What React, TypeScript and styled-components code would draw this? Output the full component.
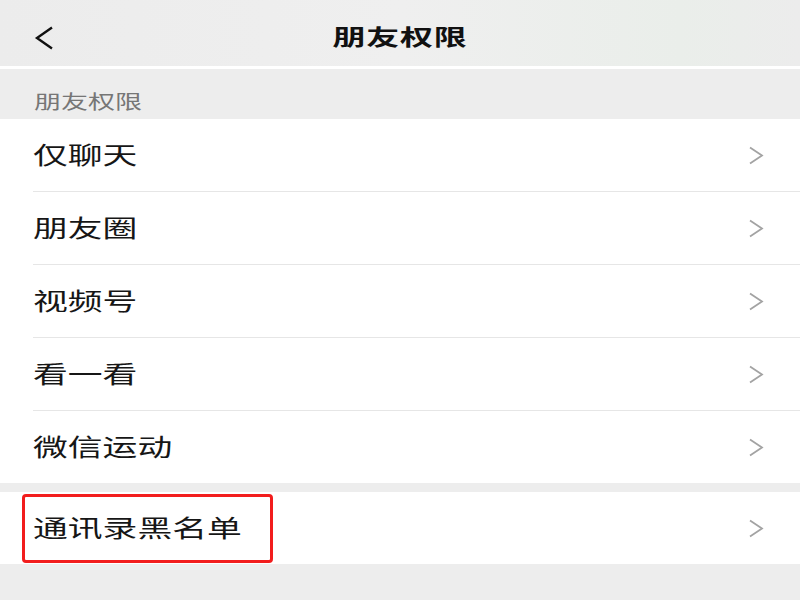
import styled, { createGlobalStyle } from 'styled-components';
import { FC } from 'react';

const GlobalStyle = createGlobalStyle`
  html, body {
    margin: 0;
    padding: 0;
    background: #ededed;
  }
  body {
    font-family: "Noto Sans CJK SC", "Noto Sans", sans-serif;
    width: 800px;
    height: 600px;
    overflow: hidden;
  }
`;

const Page = styled.div`
  display: flex;
  flex-direction: column;
  width: 800px;
  height: 600px;
  background: #ededed;
`;

const Header = styled.header`
  position: relative;
  display: flex;
  align-items: center;
  justify-content: center;
  height: 63px;
  padding-top: 3px;
  background: linear-gradient(90deg, #ececec 0%, #efefef 50%, #eaeeea 85%, #ececec 100%);
  border-bottom: 3px solid #ffffff;
`;

const BackButton = styled.button`
  position: absolute;
  left: 30px;
  top: 23px;
  width: 28px;
  height: 30px;
  padding: 0;
  border: none;
  background: transparent;
  display: flex;
  align-items: center;
  justify-content: center;
`;

// the screenshot is stretched sideways, so the glyphs are too
const Stretch = styled.span<{ origin?: string; scale?: number }>`
  display: inline-block;
  transform: scaleX(${({ scale }) => scale ?? 1.45});
  transform-origin: ${({ origin }) => origin ?? 'left center'};
  white-space: nowrap;
`;

const Title = styled.h1`
  margin: 0;
  font-size: 22px;
  font-weight: 700;
  color: #111;
  letter-spacing: 0.5px;
`;

const SectionLabel = styled.div`
  height: 50px;
  box-sizing: border-box;
  padding: 20px 0 0 34px;
  font-size: 19px;
  line-height: 24px;
  color: #767676;
`;

const Group = styled.div`
  display: flex;
  flex-direction: column;
  background: #ffffff;
`;

const Row = styled.div<{ divider: boolean }>`
  position: relative;
  display: flex;
  align-items: center;
  justify-content: space-between;
  height: 72px;
  padding: 0 36px 0 33px;
  box-sizing: border-box;
  margin-bottom: ${({ divider }) => (divider ? '1px' : '0')};

  &::after {
    content: '';
    display: ${({ divider }) => (divider ? 'block' : 'none')};
    position: absolute;
    left: 33px;
    right: 0;
    bottom: -1px;
    height: 1px;
    background: #e6e6e6;
  }
`;

const RowText = styled.span`
  font-size: 24px;
  line-height: 30px;
  color: #161616;
  margin-top: -2px;
`;

const Spacer = styled.div`
  height: 9px;
`;

const Highlight = styled.div`
  position: absolute;
  left: 22px;
  top: 2px;
  width: 251px;
  height: 69px;
  box-sizing: border-box;
  border: 3px solid #f21d1d;
  border-radius: 4px;
  pointer-events: none;
`;

const Chevron: FC = () => (
  <svg width="16" height="19" viewBox="0 0 16 19" fill="none">
    <path d="M2 1.5 L14 9.5 L2 17.5" stroke="#a3a3a3" strokeWidth="1.8" strokeLinejoin="miter" />
  </svg>
);

const BackIcon: FC = () => (
  <svg width="22" height="24" viewBox="0 0 22 24" fill="none">
    <path d="M19 1.5 L4 12 L19 22.5" stroke="#111" strokeWidth="2.4" />
  </svg>
);

const items = ['仅聊天', '朋友圈', '视频号', '看一看', '微信运动'];

export default function App() {
  return (
    <Page>
      <GlobalStyle />
      <Header>
        <BackButton aria-label="返回">
          <BackIcon />
        </BackButton>
        <Title>
          <Stretch origin="center" scale={1.5}>朋友权限</Stretch>
        </Title>
      </Header>
      <SectionLabel>
        <Stretch scale={1.42}>朋友权限</Stretch>
      </SectionLabel>
      <Group>
        {items.map((label, i) => (
          <Row key={label} divider={i < items.length - 1}>
            <RowText>
              <Stretch>{label}</Stretch>
            </RowText>
            <Chevron />
          </Row>
        ))}
      </Group>
      <Spacer />
      <Group>
        <Row divider={false}>
          <RowText>
            <Stretch>通讯录黑名单</Stretch>
          </RowText>
          <Chevron />
          <Highlight />
        </Row>
      </Group>
    </Page>
  );
}
